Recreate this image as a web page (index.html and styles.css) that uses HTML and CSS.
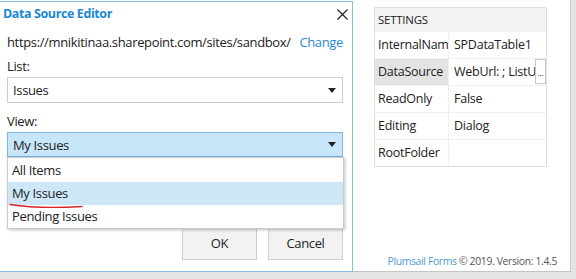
FILE: index.html
```html
<!DOCTYPE html>
<html>
<head>
<meta charset="utf-8">
<link rel="stylesheet" href="styles.css">
</head>
<body>
<div class="app">
  <div class="designer">
    <div class="spacer"></div>
    <div class="side">
      <div class="settings">
        <div class="settings-head">SETTINGS</div>
        <div class="row"><div class="key">InternalName</div><div class="val">SPDataTable1</div></div>
        <div class="row"><div class="key key-sel">DataSource</div><div class="val val-btn"><span class="val-text">WebUrl: ; ListUrl: ; View:</span><span class="dots">…</span></div></div>
        <div class="row"><div class="key">ReadOnly</div><div class="val">False</div></div>
        <div class="row"><div class="key">Editing</div><div class="val">Dialog</div></div>
        <div class="row"><div class="key">RootFolder</div><div class="val"></div></div>
      </div>
      <div class="footer"><span class="brand">Plumsail Forms</span> © 2019. Version: 1.4.5</div>
    </div>
  </div>

  <div class="dialog">
    <div class="dlg-title">
      <span>Data Source Editor</span>
      <svg class="close" width="11" height="11" viewBox="0 0 11 11"><path d="M0.5 0.5 L10.5 10.5 M10.5 0.5 L0.5 10.5" stroke="#222" stroke-width="1.2" fill="none"/></svg>
    </div>
    <div class="url-line"><span>https://mnikitinaa.sharepoint.com/sites/sandbox/</span><span class="link">Change</span></div>
    <div class="label label-list">List:</div>
    <div class="select"><span>Issues</span><i class="caret"></i></div>
    <div class="label label-view">View:</div>
    <div class="select select-active"><span>My Issues</span><i class="caret"></i></div>
    <div class="buttons">
      <div class="btn">OK</div>
      <div class="btn">Cancel</div>
    </div>
    <div class="dropdown">
      <div class="opt">All Items</div>
      <div class="opt opt-sel">My Issues</div>
      <div class="opt">Pending Issues</div>
      <svg class="mark" width="74" height="6" viewBox="0 0 74 6"><path d="M1 1.5 C 20 4.5, 50 4.8, 73 3.5" stroke="#d9242a" stroke-width="1.4" fill="none" stroke-linecap="round"/></svg>
    </div>
  </div>
</div>
</body>
</html>
```
FILE: styles.css
```css
* { box-sizing: border-box; }
html, body { margin: 0; padding: 0; }
body {
  width: 576px;
  height: 279px;
  overflow: hidden;
  background: #e4e4e4;
  font-family: "Open Sans", "Noto Sans", sans-serif;
  color: #222;
}
.app {
  position: relative;
  width: 571px;
  height: 272px;
  background: #fff;
  border-right: 1px solid #cfcfcf;
  border-bottom: 1px solid #c4c4c4;
}
.designer {
  display: flex;
  height: 100%;
}
.spacer { width: 374px; flex: none; }
.side {
  flex: 1;
  display: flex;
  flex-direction: column;
  padding-top: 7px;
}
.settings {
  width: 173px;
  border: 1px solid #dedede;
  font-size: 12.5px;
  letter-spacing: -0.25px;
}
.settings-head {
  height: 23px;
  line-height: 23px;
  background: #f3f3f3;
  padding-left: 3px;
  font-size: 11.5px;
  color: #222;
}
.row {
  display: flex;
  height: 27px;
  border-top: 1px solid #f0f0f0;
}
.key {
  width: 74px;
  flex: none;
  padding-left: 3px;
  line-height: 26px;
  white-space: nowrap;
  overflow: hidden;
  border-right: 1px solid #f0f0f0;
}
.key-sel { background: #e3e3e3; }
.val {
  flex: 1;
  padding-left: 5px;
  line-height: 26px;
  white-space: nowrap;
  overflow: hidden;
}
.val-btn { display: flex; padding-right: 0; }
.val-text { flex: 1; overflow: hidden; }
.dots {
  width: 11px;
  flex: none;
  border: 1px solid #c9c9c9;
  background: #fff;
  display: flex;
  align-items: flex-end;
  justify-content: center;
  font-size: 8px;
  line-height: 12px;
  letter-spacing: 0;
  padding-bottom: 4px;
  margin: 0 0 1px 0;
}
.footer {
  margin-top: auto;
  padding: 0 13px 3px 0;
  text-align: right;
  white-space: nowrap;
  font-size: 10.4px;
  color: #555;
  letter-spacing: -0.35px;
}
.brand { color: #4f97d8; }

.dialog {
  position: absolute;
  left: -1px;
  top: 1px;
  width: 354px;
  height: 271px;
  background: #fff;
  border: 1px solid #86bde7;
  padding: 0 9px 0 7px;
  display: flex;
  flex-direction: column;
  font-size: 13px;
  letter-spacing: -0.35px;
}
.dlg-title {
  height: 21px;
  display: flex;
  align-items: center;
  justify-content: space-between;
  font-weight: bold;
  font-size: 12.5px;
  color: #1a88d6;
  letter-spacing: -0.4px;
  padding-top: 1px;
  margin-left: -4px;
}
.close { margin-top: 3px; margin-right: -5px; }
.url-line {
  margin-top: 9px;
  height: 20px;
  line-height: 20px;
  display: flex;
  justify-content: space-between;
  color: #222;
}
.link { color: #2b8ad6; }
.label { height: 20px; line-height: 20px; }
.label-list { margin-top: 4px; }
.label-view { margin-top: 8px; }
.select {
  height: 26px;
  border: 1px solid #cdcdcd;
  display: flex;
  align-items: center;
  justify-content: space-between;
  padding: 0 6px 0 5px;
  margin-top: 1px;
}
.select-active {
  height: 25px;
  background: #c7e6f9;
  border-color: #7db8e3;
  margin-top: 1px;
}
.caret {
  width: 0;
  height: 0;
  border-left: 4px solid transparent;
  border-right: 4px solid transparent;
  border-top: 5px solid #222;
}
.buttons {
  margin-top: auto;
  margin-bottom: 11px;
  display: flex;
  justify-content: flex-end;
  gap: 11px;
}
.btn {
  width: 75px;
  height: 33px;
  line-height: 31px;
  text-align: center;
  background: #f2f2f2;
  border: 1px solid #cfcfcf;
  color: #222;
}
.dropdown {
  position: absolute;
  left: 7px;
  top: 155px;
  width: 337px;
  height: 72px;
  background: #fff;
  border: 1px solid #cbcbcb;
  box-shadow: 1px 1px 3px rgba(0,0,0,0.25);
  padding-top: 1px;
}
.opt {
  height: 23px;
  line-height: 23px;
  padding-left: 4px;
}
.opt-sel { background: #cde7f6; }
.mark {
  position: absolute;
  left: 1px;
  top: 45px;
}
```
